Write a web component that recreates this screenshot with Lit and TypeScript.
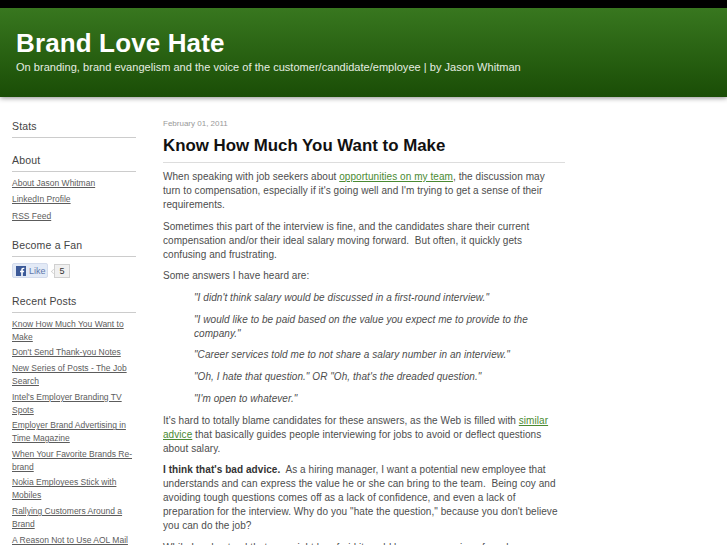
import { LitElement, html, css } from "lit";
import { customElement } from "lit/decorators.js";

const recent = [
  "Know How Much You Want to Make",
  "Don't Send Thank-you Notes",
  "New Series of Posts - The Job Search",
  "Intel's Employer Branding TV Spots",
  "Employer Brand Advertising in Time Magazine",
  "When Your Favorite Brands Re-brand",
  "Nokia Employees Stick with Mobiles",
  "Rallying Customers Around a Brand",
  "A Reason Not to Use AOL Mail",
];

@customElement("app-root")
export class AppRoot extends LitElement {
  static styles = css`
    :host { display: block; height: 545px; overflow: hidden; background: #fff; font-family: "Liberation Sans", Arial, sans-serif; color: #444; }
    header { height: 89px; border-top: 8px solid #000; background: linear-gradient(#38771f, #1a4d06); padding: 0 16px; box-shadow: 0 1px 5px rgba(0,0,0,.45); position: relative; }
    h1 { margin: 0; padding-top: 20px; font-size: 26px; line-height: 31px; color: #fff; font-weight: bold; letter-spacing: .13px; }
    .tag { font-size: 11px; line-height: 14px; margin-top: 1px; color: #e6eee2; letter-spacing: .03px; }
    .wrap { display: grid; grid-template-columns: 124px 402px; column-gap: 27px; padding: 0 0 0 12px; }
    aside { padding-top: 22px; }
    h2 { margin: 0 0 5px; padding-bottom: 3px; font-size: 10.5px; line-height: 15px; font-weight: normal; letter-spacing: .17px; color: #444; border-bottom: 1px solid #ccc; }
    .sec { margin-bottom: 15px; }
    ul { list-style: none; margin: 0; padding: 0; }
    .about { margin-bottom: 1px; }
    li { font-size: 8.5px; line-height: 13px; margin-bottom: 2.6px; }
    .about li { margin-bottom: 3.4px; }
    li a { color: #5c5c5c; text-decoration: underline; }
    .like { display: flex; align-items: center; gap: 6px; height: 18px; margin-bottom: 14px; }
    .btn { display: flex; align-items: center; gap: 3px; width: 36px; height: 15px; box-sizing: border-box; padding-left: 3px; background: #e3eaf6; border: 1px solid #d3dbec; border-radius: 2px; font-size: 9px; color: #6079ad; }
    .btn svg { display: block; }
    .count { width: 16px; height: 14px; box-sizing: border-box; border: 1px solid #d0d0d0; background: #f0f0f0; font-size: 9px; line-height: 12px; text-align: center; color: #333; position: relative; }
    .count::before { content: ""; position: absolute; left: -4px; top: 4px; width: 4px; height: 4px; border-left: 1px solid #ccc; border-bottom: 1px solid #ccc; transform: rotate(45deg) scale(.7); }
    main { padding-top: 22px; }
    .date { font-size: 8px; line-height: 10px; color: #999; }
    h3 { margin: 7px 0 7px; padding-bottom: 6px; font-size: 16.85px; line-height: 20px; color: #111; font-weight: bold; border-bottom: 1px solid #ddd; }
    p { margin: 0 6px 7.7px 0; font-size: 10px; line-height: 14px; letter-spacing: .06px; color: #4d4d4d; }
    p a { color: #4a8a32; text-decoration: underline; }
    blockquote { margin: 0 0 7.7px 31px; font-style: italic; }
    blockquote p { margin-bottom: 7.7px; }
    b { color: #333; }
  `;

  render() {
    return html`
      <header>
        <h1>Brand Love Hate</h1>
        <div class="tag">On branding, brand evangelism and the voice of the customer/candidate/employee | by Jason Whitman</div>
      </header>
      <div class="wrap">
        <aside>
          <div class="sec"><h2>Stats</h2></div>
          <div class="sec">
            <h2>About</h2>
            <ul class="about">
              <li><a>About Jason Whitman</a></li>
              <li><a>LinkedIn Profile</a></li>
              <li><a>RSS Feed</a></li>
            </ul>
          </div>
          <div>
            <h2>Become a Fan</h2>
            <div class="like">
              <div class="btn">
                <svg width="10" height="10" viewBox="0 0 10 10"><rect width="10" height="10" fill="#3b5998"/><path d="M6.8 10V6.2H8L8.2 4.7H6.8V3.8C6.8 3.3 7 3 7.6 3H8.3V1.7H7.3C5.9 1.7 5.2 2.5 5.2 3.7V4.7H4V6.2H5.2V10Z" fill="#fff"/></svg>
                <span>Like</span>
              </div>
              <div class="count">5</div>
            </div>
          </div>
          <div class="sec">
            <h2>Recent Posts</h2>
            <ul>${recent.map((r) => html`<li><a>${r}</a></li>`)}</ul>
          </div>
        </aside>
        <main>
          <div class="date">February 01, 2011</div>
          <h3>Know How Much You Want to Make</h3>
          <p>When speaking with job seekers about <a>opportunities on my team</a>, the discussion may turn to compensation, especially if it's going well and I'm trying to get a sense of their requirements.</p>
          <p>Sometimes this part of the interview is fine, and the candidates share their current compensation and/or their ideal salary moving forward.&nbsp; But often, it quickly gets confusing and frustrating.</p>
          <p>Some answers I have heard are:</p>
          <blockquote>
            <p>"I didn't think salary would be discussed in a first-round interview."</p>
            <p>"I would like to be paid based on the value you expect me to provide to the company."</p>
            <p>"Career services told me to not share a salary number in an interview."</p>
            <p>"Oh, I hate that question." OR "Oh, that's the dreaded question."</p>
            <p>"I'm open to whatever."</p>
          </blockquote>
          <p>It's hard to totally blame candidates for these answers, as the Web is filled with <a>similar advice</a> that basically guides people interviewing for jobs to avoid or deflect questions about salary.</p>
          <p><b>I think that's bad advice.</b>&nbsp; As a hiring manager, I want a potential new employee that understands and can express the value he or she can bring to the team.&nbsp; Being coy and avoiding tough questions comes off as a lack of confidence, and even a lack of preparation for the interview. Why do you "hate the question," because you don't believe you can do the job?</p>
          <p>While I understand that you might be afraid it could be seen as a sign of weakness, a job seeker especially</p>
        </main>
      </div>
    `;
  }
}
